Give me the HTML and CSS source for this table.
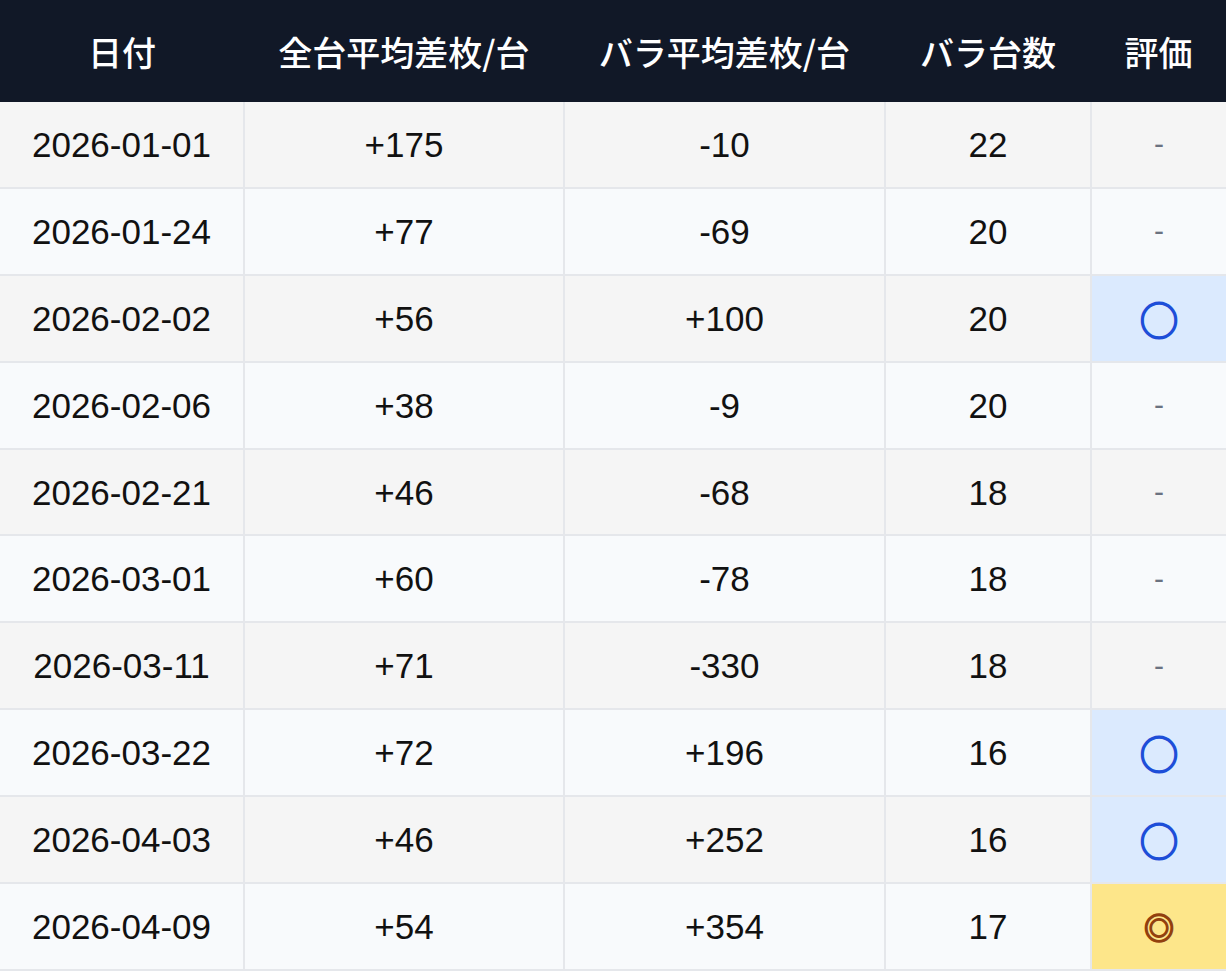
FILE: index.html
```html
<!DOCTYPE html>
<html lang="ja">
<head>
<meta charset="utf-8">
<link rel="stylesheet" href="styles.css">
</head>
<body>
<table class="tbl">
  <colgroup>
    <col class="c1"><col class="c2"><col class="c3"><col class="c4"><col class="c5">
  </colgroup>
  <thead>
    <tr><th>日付</th><th>全台平均差枚/台</th><th>バラ平均差枚/台</th><th>バラ台数</th><th>評価</th></tr>
  </thead>
  <tbody>
    <tr><td>2026-01-01</td><td>+175</td><td>-10</td><td>22</td><td class="dash">-</td></tr>
    <tr><td>2026-01-24</td><td>+77</td><td>-69</td><td>20</td><td class="dash">-</td></tr>
    <tr><td>2026-02-02</td><td>+56</td><td>+100</td><td>20</td><td class="good">○</td></tr>
    <tr><td>2026-02-06</td><td>+38</td><td>-9</td><td>20</td><td class="dash">-</td></tr>
    <tr><td>2026-02-21</td><td>+46</td><td>-68</td><td>18</td><td class="dash">-</td></tr>
    <tr><td>2026-03-01</td><td>+60</td><td>-78</td><td>18</td><td class="dash">-</td></tr>
    <tr><td>2026-03-11</td><td>+71</td><td>-330</td><td>18</td><td class="dash">-</td></tr>
    <tr><td>2026-03-22</td><td>+72</td><td>+196</td><td>16</td><td class="good">○</td></tr>
    <tr><td>2026-04-03</td><td>+46</td><td>+252</td><td>16</td><td class="good">○</td></tr>
    <tr><td>2026-04-09</td><td>+54</td><td>+354</td><td>17</td><td class="best">◎</td></tr>
  </tbody>
</table>
</body>
</html>
```

FILE: styles.css
```css
html, body {
  margin: 0;
  padding: 0;
  background: #ffffff;
}
.tbl {
  width: 1226px;
  border-collapse: collapse;
  table-layout: fixed;
  font-family: "Liberation Sans", "Noto Sans CJK JP", sans-serif;
  font-size: 35px;
  color: #111111;
}
.c1 { width: 244px; }
.c2 { width: 320px; }
.c3 { width: 321px; }
.c4 { width: 206px; }
.c5 { width: 135px; }
.tbl th {
  background: #111827;
  color: #ffffff;
  font-family: "Noto Sans CJK JP", "Liberation Sans", sans-serif;
  font-weight: 500;
  font-size: 34px;
  height: 102px;
  padding: 0;
  text-align: center;
  vertical-align: middle;
}
.tbl td {
  height: 84.9px;
  padding: 0;
  text-align: center;
  vertical-align: middle;
  border: 2px solid #e5e7eb;
  border-top: 0;
  line-height: 1;
}
.tbl td:first-child { border-left: 0; }
.tbl td:last-child { border-right: 0; }
.tbl tbody tr:nth-child(odd) td { background: #f5f5f5; }
.tbl tbody tr:nth-child(even) td { background: #f8fafc; }
.tbl tbody tr td.dash { color: #6b7280; font-size: 30px; }
.tbl tbody tr td.good {
  background: #dbeafe;
  color: #1d4ed8;
  font-family: "Noto Sans CJK JP", sans-serif;
  font-weight: 700;
  font-size: 39px;
  -webkit-text-stroke: 1.4px #1d4ed8;
}
.tbl tbody tr td.best {
  background: #fde68a;
  color: #92400e;
  font-family: "Noto Sans CJK JP", sans-serif;
  font-weight: 700;
  font-size: 30px;
  -webkit-text-stroke: 1.6px #92400e;
}
```
